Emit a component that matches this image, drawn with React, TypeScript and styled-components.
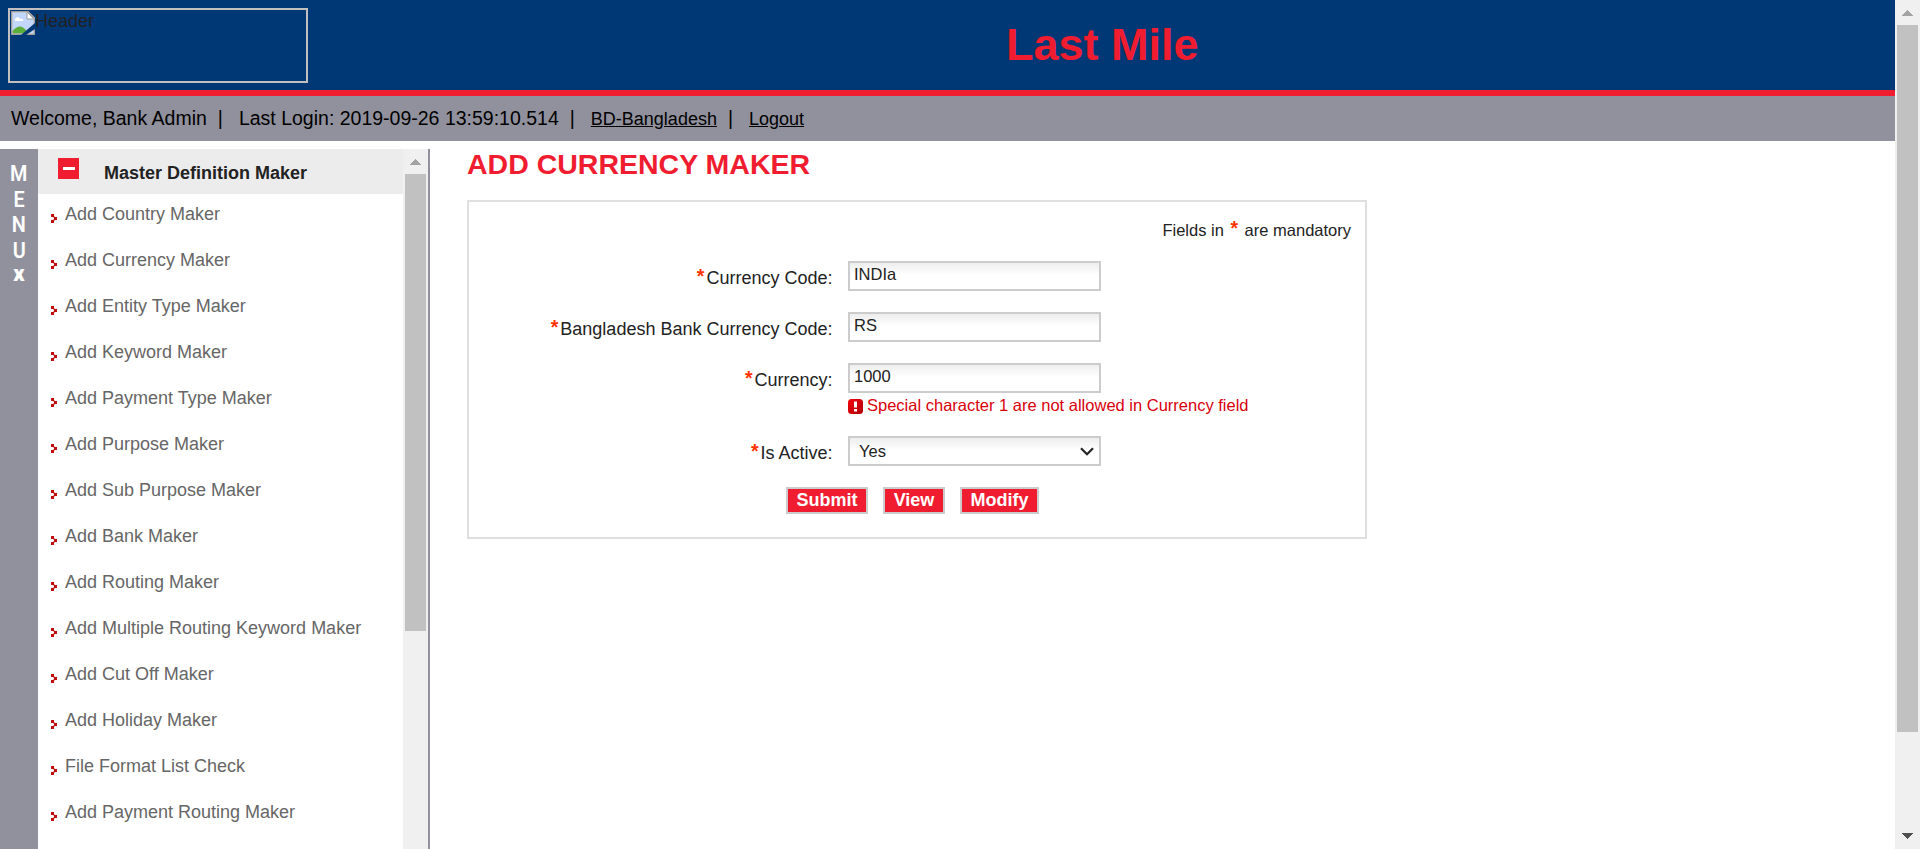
import React from "react";
import styled, { createGlobalStyle } from "styled-components";

const Global = createGlobalStyle`
  * { box-sizing: border-box; }
  html, body { margin: 0; padding: 0; }
  body { font-family: "Liberation Sans", Arial, sans-serif; font-size: 18px; color: #222; background: #fff; overflow: hidden; }
`;

const Window = styled.div`
  display: flex;
  height: 849px;
  width: 1920px;
`;
const Page = styled.div`
  flex: 1;
  min-width: 0;
  display: flex;
  flex-direction: column;
`;
const Header = styled.header`
  height: 96px;
  flex: none;
  display: flex;
  background: #003876;
  border-bottom: 6px solid #f01c2f;
`;
const LogoBox = styled.div`
  margin: 8px 0 0 8px;
  width: 300px;
  height: 75px;
  border: 2px solid #c0c0c0;
  display: flex;
  align-items: flex-start;
  padding: 1px;
  line-height: 20px;
`;
const Brand = styled.h1`
  margin: 0;
  padding: 19px 0 0 698px;
  font-size: 45px;
  line-height: 52px;
  color: #f01c2f;
`;
const InfoBar = styled.div`
  height: 45px;
  flex: none;
  display: flex;
  align-items: baseline;
  padding: 11px 0 0 11px;
  background: #91919d;
  color: #000;
  font-size: 19.5px;
  line-height: 22px;
  white-space: pre;
`;
const BarSep = styled.span`
  margin: 0 16px 0 11px;
`;
const BarLink = styled.a`
  font-size: 18px;
  text-decoration: underline;
`;
const Body = styled.div`
  flex: 1;
  min-height: 0;
  display: flex;
  margin-top: 8px;
`;
const MenuStrip = styled.div`
  width: 38px;
  background: #91919d;
  display: flex;
  flex-direction: column;
  align-items: center;
  padding: 12px 0 0 0;
  color: #fff;
  font: 600 22px/25.6px Roboto, sans-serif;
`;
const MenuLetter = styled.span`
  transform: scaleX(0.9);
`;
const CloseMark = styled.span`
  margin-top: -2px;
  font-weight: 900;
`;
const Side = styled.nav`
  width: 392px;
  display: flex;
  border-right: 2px solid #91919d;
`;
const SideList = styled.div`
  flex: 1;
  overflow: hidden;
`;
const GroupHead = styled.div`
  height: 45px;
  background: #ececec;
  display: flex;
  padding: 9px 0 0 20px;
  font-weight: bold;
  line-height: 30px;
`;
const Minus = styled.span`
  width: 21px;
  height: 21px;
  margin-right: 25px;
  background: #f01c2f;
  display: flex;
  justify-content: center;
  padding-top: 9px;
  &::before { content: ""; width: 12px; height: 3px; background: #fff; }
`;
const Item = styled.div`
  height: 46px;
  display: flex;
  align-items: flex-start;
  padding: 9px 0 0 13px;
  color: #666;
  line-height: 22px;
`;
const BulletSvg = styled.svg`
  margin: 11px 8px 0 0;
  flex: none;
`;
const Scrollbar = styled.div`
  width: 25px;
  flex: none;
  background: #f0f0f0;
  display: flex;
  flex-direction: column;
  align-items: center;
  justify-content: flex-start;
`;
const ScrollArrow = styled.svg`
  flex: none;
`;
const Thumb = styled.div<{ $h: number }>`
  width: 21px;
  height: ${(p) => p.$h}px;
  background: #c1c1c1;
`;
const Grow = styled.div`
  flex: 1;
`;
const Main = styled.main`
  padding-left: 37px;
`;
const Title = styled.h2`
  margin: 0;
  height: 51px;
  font-size: 28.5px;
  line-height: 30px;
  color: #f01c2f;
`;
const Panel = styled.form`
  width: 900px;
  height: 339px;
  border: 2px solid #dfdfdf;
  padding-top: 15px;
`;
const Note = styled.div`
  height: 44px;
  padding-right: 14px;
  text-align: right;
  font-size: 16.5px;
  line-height: 24px;
  white-space: pre;
`;
const Star = styled.span<{ $before?: number }>`
  color: #ff3300;
  font-size: 19.5px;
  font-weight: bold;
  position: relative;
  top: -1px;
  margin-left: ${(p) => p.$before ?? 0}px;
  margin-right: 2px;
`;
const Row = styled.div<{ $h: number }>`
  height: ${(p) => p.$h}px;
  display: flex;
`;
const Label = styled.label`
  width: 363.5px;
  margin-right: 15.5px;
  text-align: right;
  line-height: 32px;
  white-space: nowrap;
`;
const Input = styled.input`
  display: block;
  width: 253px;
  height: 30px;
  border: 2px solid #ccc;
  border-radius: 0;
  padding: 0 4px 4px;
  background: linear-gradient(#ededed, #fff 12px);
  font: 16.5px "Liberation Sans", Arial, sans-serif;
  color: #222;
  outline: none;
`;
const Select = styled.div`
  width: 253px;
  height: 30px;
  border: 2px solid #ccc;
  background: linear-gradient(#ededed, #fff 12px);
  display: flex;
  justify-content: space-between;
  padding: 0 5px 0 9px;
  align-items: center;
  font-size: 16.5px;
  line-height: 24px;
`;
const ErrorLine = styled.div`
  display: flex;
  align-items: center;
  gap: 4px;
  color: #d8000c;
  font-size: 16.5px;
  line-height: 25px;
`;
const ErrorIcon = styled.svg`
  margin-top: 1px;
`;
const Actions = styled.div`
  display: flex;
  gap: 15px;
  padding-left: 317px;
`;
const Button = styled.button<{ $w: number }>`
  width: ${(p) => p.$w}px;
  height: 27px;
  padding: 0 0 1px;
  border: 2px solid #ccc;
  background: #f01c2f;
  color: #fff;
  font: bold 18px/20px "Liberation Sans", Arial, sans-serif;
`;

const BrokenImage = () => (
  <svg width="24" height="24" viewBox="0 0 24 24">
    <path d="M0 0h17l7 7v17H0z" fill="#fff" />
    <path d="M1.5 1.5H16l6.500 6.500v14.500h-21z" fill="#c3d7fb" />
    <path d="M4 9c0-3 4-4 5-1 3-1 4 1 3 2H4z" fill="#fff" />
    <path d="M1.500 22.500V20c5-6 10-6 14 0l1 2.500z" fill="#5bae38" />
    <path d="M.75 .75H17L23.250 7v16.250H.75z" fill="none" stroke="#a0a0a0" strokeWidth="1.500" />
    <path d="M16 1v7h7z" fill="#fff" stroke="#a0a0a0" />
    <path d="M24 12L10 24h5l9-6z" fill="#003876" />
  </svg>
);
const Bullet = () => (
  <BulletSvg width="6" height="9" viewBox="0 0 6 9" shapeRendering="crispEdges">
    <path d="M0 0h3v3h-3zM3 3h3v3h-3zM0 6h3v3h-3z" fill="#c00d0d" />
    <path d="M3 2h1v1h-1zM2 3h1v1h-1zM2 5h1v1h-1zM3 6h1v1h-1z" fill="#e79a9a" />
  </BulletSvg>
);
const Arrow = ({ down, color }: { down?: boolean; color: string }) => (
  <ScrollArrow width="25" height="25" viewBox="0 0 25 25" shapeRendering="crispEdges">
    <path d={down ? "M7 9h11l-5.500 6z" : "M7 16h11l-5.500-6z"} fill={color} />
  </ScrollArrow>
);

const items = [
  "Add Country Maker", "Add Currency Maker", "Add Entity Type Maker", "Add Keyword Maker",
  "Add Payment Type Maker", "Add Purpose Maker", "Add Sub Purpose Maker", "Add Bank Maker",
  "Add Routing Maker", "Add Multiple Routing Keyword Maker", "Add Cut Off Maker",
  "Add Holiday Maker", "File Format List Check", "Add Payment Routing Maker",
];

export default function App() {
  return (
    <Window>
      <Global />
      <Page>
        <Header>
          <LogoBox><BrokenImage />Header</LogoBox>
          <Brand>Last Mile</Brand>
        </Header>
        <InfoBar>
          <span>Welcome, Bank Admin</span>
          <BarSep>|</BarSep>
          <span>Last Login: 2019-09-26 13:59:10.514</span>
          <BarSep>|</BarSep>
          <BarLink>BD-Bangladesh</BarLink>
          <BarSep>|</BarSep>
          <BarLink>Logout</BarLink>
        </InfoBar>
        <Body>
          <MenuStrip>
            {["M", "E", "N", "U"].map((c) => <MenuLetter key={c}>{c}</MenuLetter>)}
            <CloseMark>x</CloseMark>
          </MenuStrip>
          <Side>
            <SideList>
              <GroupHead><Minus />Master Definition Maker</GroupHead>
              {items.map((t) => <Item key={t}><Bullet />{t}</Item>)}
            </SideList>
            <Scrollbar>
              <Arrow color="#a3a3a3" />
              <Thumb $h={457} />
            </Scrollbar>
          </Side>
          <Main>
            <Title>ADD CURRENCY MAKER</Title>
            <Panel>
              <Note>Fields in <Star $before={2}>*</Star> are mandatory</Note>
              <Row $h={51}><Label><Star>*</Star>Currency Code:</Label><Input defaultValue="INDIa" /></Row>
              <Row $h={51}><Label><Star>*</Star>Bangladesh Bank Currency Code:</Label><Input defaultValue="RS" /></Row>
              <Row $h={73}>
                <Label><Star>*</Star>Currency:</Label>
                <div>
                  <Input defaultValue="1000" />
                  <ErrorLine>
                    <ErrorIcon width="15" height="15" viewBox="0 0 15 15">
                      <defs>
                        <linearGradient id="alert" x1="0" y1="0" x2="1" y2="1">
                          <stop offset="0" stopColor="#f5000c" />
                          <stop offset="1" stopColor="#b00008" />
                        </linearGradient>
                      </defs>
                      <rect width="15" height="15" rx="3.500" fill="url(#alert)" />
                      <path d="M6 2.500h3v6H6zM6 10h3v2.500H6z" fill="#fff" />
                    </ErrorIcon>
                    Special character 1 are not allowed in Currency field
                  </ErrorLine>
                </div>
              </Row>
              <Row $h={51}>
                <Label><Star>*</Star>Is Active:</Label>
                <Select>
                  Yes
                  <svg width="14" height="9" viewBox="0 0 14 9"><path d="M1 1.200l6 6 6-6" fill="none" stroke="#222" strokeWidth="2.200" /></svg>
                </Select>
              </Row>
              <Actions>
                <Button type="button" $w={82}>Submit</Button>
                <Button type="button" $w={62}>View</Button>
                <Button type="button" $w={79}>Modify</Button>
              </Actions>
            </Panel>
          </Main>
        </Body>
      </Page>
      <Scrollbar>
        <Arrow color="#a3a3a3" />
        <Thumb $h={707} />
        <Grow />
        <Arrow down color="#505050" />
      </Scrollbar>
    </Window>
  );
}
